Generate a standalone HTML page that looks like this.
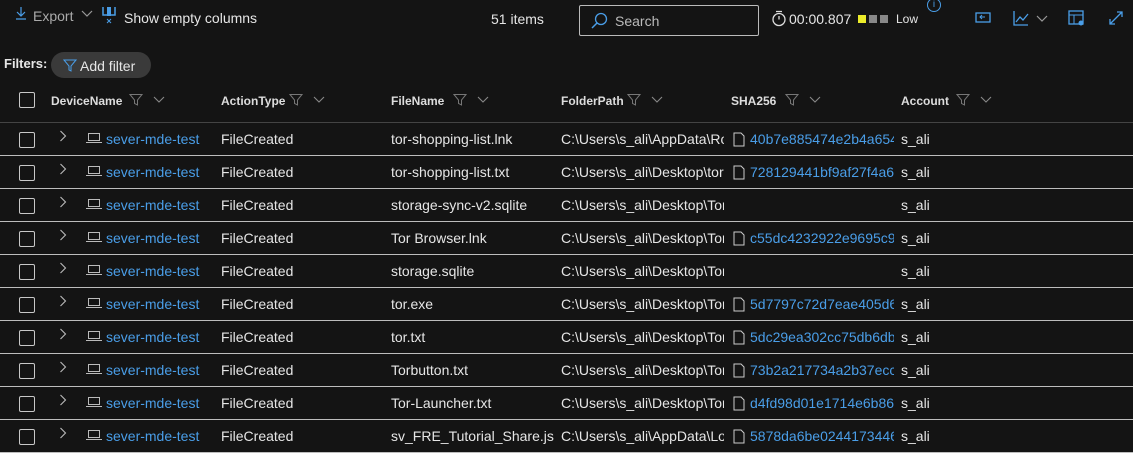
<!DOCTYPE html><html><head><style>
body{margin:0;width:1133px;height:450px;background:#141414;color:#e6e6e6;font-family:"Liberation Sans",sans-serif;font-size:14px;overflow:hidden;position:relative}
.a{position:absolute;white-space:nowrap}
.blue{color:#4a9ee8}
.cb{position:absolute;width:14px;height:14px;border:1px solid #c8c8c8;border-radius:2px}
.row{position:absolute;left:0;width:1133px;height:33px;border-bottom:1px solid #bdbdbd}
.clip{position:absolute;overflow:hidden;white-space:nowrap}
.h{position:absolute;top:94px;font-weight:bold;font-size:12px;color:#ddd}
.fi{position:absolute;top:93px}
</style></head><body>
<svg class="a" style="left:15px;top:6px" width="12" height="14"><path d="M6 1v9M2 6l4 4 4-4M1 13h10" fill="none" stroke="#4a9ee8" stroke-width="1.2"/></svg>
<div class="a" style="left:33px;top:8px;color:#aaa">Export</div>
<svg class="a" style="left:81px;top:10px" width="12" height="8"><path d="M1 1l5 5 5-5" fill="none" stroke="#999" stroke-width="1.2"/></svg>
<svg class="a" style="left:101px;top:5px" width="16" height="20"><path d="M2 2v8h12V2" fill="none" stroke="#4a9ee8" stroke-width="1.5"/><rect x="6" y="2" width="4" height="9" fill="#4a9ee8"/><path d="M6 14l4 4M10 14l-4 4" stroke="#4a9ee8"/></svg>
<div class="a" style="left:124px;top:10px">Show empty columns</div>
<div class="a" style="left:491px;top:11px">51 items</div>
<div class="a" style="left:579px;top:5px;width:178px;height:29px;border:1px solid #bbb;border-radius:2px"></div>
<svg class="a" style="left:591px;top:12px" width="18" height="18"><circle cx="10" cy="7" r="5.5" fill="none" stroke="#4a9ee8" stroke-width="1.3"/><path d="M6 11L1 16" stroke="#4a9ee8" stroke-width="1.5"/></svg>
<div class="a" style="left:615px;top:13px;color:#bbb">Search</div>
<svg class="a" style="left:771px;top:10px" width="16" height="17"><circle cx="8" cy="9.5" r="6" fill="none" stroke="#ddd" stroke-width="1.3"/><path d="M5 1.5h6M8 9.5V6" stroke="#ddd" stroke-width="1.3"/></svg>
<div class="a" style="left:789px;top:11px">00:00.807</div>
<div class="a" style="left:858px;top:15px;width:8px;height:8px;background:#ecec2a"></div>
<div class="a" style="left:869px;top:15px;width:8px;height:8px;background:#888"></div>
<div class="a" style="left:880px;top:15px;width:8px;height:8px;background:#888"></div>
<div class="a" style="left:896px;top:12px;font-size:12px">Low</div>
<div class="a" style="left:927px;top:-2px;width:12px;height:12px;border:1px solid #4a9ee8;border-radius:50%;color:#4a9ee8;font-size:10px;text-align:center;line-height:12px">i</div>
<svg class="a" style="left:975px;top:10px" width="18" height="14"><rect x="1" y="3" width="14" height="9" fill="none" stroke="#4a9ee8" stroke-width="1.3"/><path d="M10 7H5M7 5L5 7l2 2" fill="none" stroke="#4a9ee8"/></svg>
<svg class="a" style="left:1013px;top:10px" width="16" height="16"><path d="M1 1v14h14M3 12l4-5 3 3 5-6" fill="none" stroke="#4a9ee8" stroke-width="1.3"/></svg>
<svg class="a" style="left:1036px;top:15px" width="12" height="8"><path d="M1 1l5 5 5-5" fill="none" stroke="#999" stroke-width="1.2"/></svg>
<svg class="a" style="left:1068px;top:10px" width="18" height="16"><rect x="1" y="1" width="14" height="13" fill="none" stroke="#4a9ee8" stroke-width="1.3"/><path d="M1 5h14M6 5v9" stroke="#4a9ee8"/><circle cx="13" cy="13" r="2.5" fill="#4a9ee8"/></svg>
<svg class="a" style="left:1108px;top:10px" width="16" height="16"><path d="M2 14L14 2M2 9v5h5M9 2h5v5" fill="none" stroke="#4a9ee8" stroke-width="1.3"/></svg>
<div class="a" style="left:4px;top:56px;font-weight:bold;font-size:13px">Filters:</div>
<div class="a" style="left:51px;top:52px;width:100px;height:26px;background:#3a3a3a;border-radius:13px"></div>
<svg class="a" style="left:63px;top:59px" width="14" height="13"><path d="M1 1h12L8 7v5L6 11V7z" fill="none" stroke="#4a9ee8"/></svg>
<div class="a" style="left:80px;top:58px">Add filter</div>
<div class="cb" style="left:19px;top:92px"></div>
<div id="hd"></div>
<div class="a" style="left:0;top:122px;width:1133px;height:1px;background:#444"></div>
<div id="rows"></div>
<script>
var hs=[[51,"DeviceName",129],[221,"ActionType",289],[391,"FileName",453],[561,"FolderPath",627],[731,"SHA256",785],[901,"Account",956]],hh="";
hs.forEach(function(c){hh+='<div class="h" style="left:'+c[0]+'px">'+c[1]+'</div><svg class="fi" style="left:'+c[2]+'px" width="40" height="14"><path d="M1 1.5h12L8.5 7v5L5.5 10.5V7z" fill="none" stroke="#777"/><path d="M25 4l5 5 5-5" fill="none" stroke="#888" stroke-width="1.1"/></svg>';});
document.getElementById("hd").innerHTML=hh;
var d=[["tor-shopping-list.lnk","C:\\Users\\s_ali\\AppData\\Roaming","40b7e885474e2b4a654"],["tor-shopping-list.txt","C:\\Users\\s_ali\\Desktop\\tor","728129441bf9af27f4a64"],["storage-sync-v2.sqlite","C:\\Users\\s_ali\\Desktop\\Tor",""],["Tor Browser.lnk","C:\\Users\\s_ali\\Desktop\\Tor","c55dc4232922e9695c9e"],["storage.sqlite","C:\\Users\\s_ali\\Desktop\\Tor",""],["tor.exe","C:\\Users\\s_ali\\Desktop\\Tor","5d7797c72d7eae405d6"],["tor.txt","C:\\Users\\s_ali\\Desktop\\Tor","5dc29ea302cc75db6db"],["Torbutton.txt","C:\\Users\\s_ali\\Desktop\\Tor","73b2a217734a2b37ecc"],["Tor-Launcher.txt","C:\\Users\\s_ali\\Desktop\\Tor","d4fd98d01e1714e6b86"],["sv_FRE_Tutorial_Share.js","C:\\Users\\s_ali\\AppData\\Local","5878da6be0244173446"]];
var h="";d.forEach(function(r,i){var t=122+33*i,y=t+9;
h+='<div class="row" style="top:'+t+'px"></div><div class="cb" style="left:19px;top:'+(t+10)+'px"></div>'+
'<svg class="a" style="left:59px;top:'+(t+8)+'px" width="8" height="12"><path d="M1.5 1l5 5-5 5" fill="none" stroke="#bbb" stroke-width="1.1"/></svg>'+
'<svg class="a" style="left:86px;top:'+(y+1)+'px" width="16" height="12"><rect x="2.5" y="1.5" width="11" height="7" fill="none" stroke="#bbb"/><path d="M0 10.5h16" stroke="#bbb"/></svg>'+
'<div class="a blue" style="left:106px;top:'+y+'px">sever-mde-test</div>'+
'<div class="a" style="left:221px;top:'+y+'px">FileCreated</div>'+
'<div class="a" style="left:391px;top:'+y+'px">'+r[0]+'</div>'+
'<div class="clip" style="left:561px;top:'+y+'px;width:163px">'+r[1]+'</div>'+
(r[2]?'<svg class="a" style="left:733px;top:'+(y+1)+'px" width="12" height="15"><path d="M1 1h7l3 3v10H1z" fill="none" stroke="#ccc"/></svg><div class="clip blue" style="left:750px;top:'+y+'px;width:144px">'+r[2]+'</div>':'')+
'<div class="a" style="left:901px;top:'+y+'px">s_ali</div>';});
document.getElementById("rows").innerHTML=h;
</script>
</body></html>
